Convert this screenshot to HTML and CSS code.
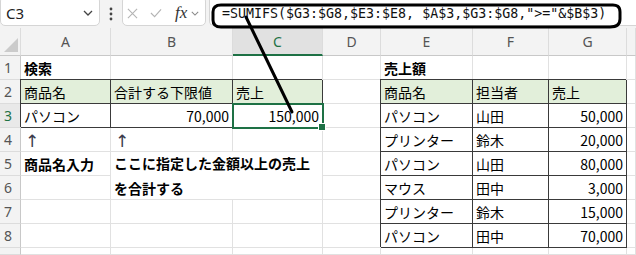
FILE: index.html
```html
<!DOCTYPE html>
<html lang="ja">
<head>
  <meta charset="UTF-8"/>
  <title>SUMIFS</title>
  <link rel="stylesheet" href="styles.css">
</head>
<body>
  <div class="toolbar">
    <div class="namebox">
      <span>C3</span>
      <svg class="chev" viewBox="0 0 10 6"><path d="M1 1l4 4 4-4"/></svg>
    </div>
    <div class="dots">
      <svg viewBox="0 0 4 14"><circle cx="2" cy="2" r="1.4"/><circle cx="2" cy="7" r="1.4"/><circle cx="2" cy="12" r="1.4"/></svg>
    </div>
    <div class="fxbox">
      <svg class="ico cross" viewBox="0 0 12 12"><path d="M1 1l10 10M11 1L1 11"/></svg>
      <svg class="ico check" viewBox="0 0 13 10"><path d="M1 5l4 4 7-8"/></svg>
      <span class="fx">fx</span>
      <svg class="chev small" viewBox="0 0 10 6"><path d="M1 1l4 4 4-4"/></svg>
    </div>
    <div class="formula">=SUMIFS($G3:$G8,$E3:$E8, $A$3,$G3:$G8,"&gt;="&amp;$B$3)</div>
  </div>

  <div class="sheet">
    <!-- column headers -->
    <div class="c ch corner"><svg viewBox="0 0 14 14"><path d="M14 0V14H0z"/></svg></div>
    <div class="c ch">A</div>
    <div class="c ch">B</div>
    <div class="c ch sel">C</div>
    <div class="c ch">D</div>
    <div class="c ch">E</div>
    <div class="c ch">F</div>
    <div class="c ch">G</div>
    <div class="c ch"></div>

    <!-- row 1 -->
    <div class="c rh">1</div>
    <div class="c b">検索</div>
    <div class="c"></div>
    <div class="c"></div>
    <div class="c"></div>
    <div class="c b">売上額</div>
    <div class="c"></div>
    <div class="c"></div>
    <div class="c"></div>

    <!-- row 2 -->
    <div class="c rh">2</div>
    <div class="c t hd">商品名</div>
    <div class="c t hd">合計する下限値</div>
    <div class="c t hd">売上</div>
    <div class="c"></div>
    <div class="c t hd">商品名</div>
    <div class="c t hd">担当者</div>
    <div class="c t hd">売上</div>
    <div class="c"></div>

    <!-- row 3 -->
    <div class="c rh rsel">3</div>
    <div class="c t">パソコン</div>
    <div class="c t num">70,000</div>
    <div class="c t num active">150,000</div>
    <div class="c"></div>
    <div class="c t">パソコン</div>
    <div class="c t">山田</div>
    <div class="c t num">50,000</div>
    <div class="c"></div>

    <!-- row 4 -->
    <div class="c rh">4</div>
    <div class="c arrow">↑&#xFE0E;</div>
    <div class="c arrow">↑&#xFE0E;</div>
    <div class="c"></div>
    <div class="c"></div>
    <div class="c t">プリンター</div>
    <div class="c t">鈴木</div>
    <div class="c t num">20,000</div>
    <div class="c"></div>

    <!-- row 5 -->
    <div class="c rh">5</div>
    <div class="c b">商品名入力</div>
    <div class="c b merged">ここに指定した金額以上の売上<br>を合計する</div>
    <div class="c"></div>
    <div class="c t">パソコン</div>
    <div class="c t">山田</div>
    <div class="c t num">80,000</div>
    <div class="c"></div>

    <!-- row 6 -->
    <div class="c rh">6</div>
    <div class="c"></div>
    <div class="c"></div>
    <div class="c t">マウス</div>
    <div class="c t">田中</div>
    <div class="c t num">3,000</div>
    <div class="c"></div>

    <!-- row 7 -->
    <div class="c rh">7</div>
    <div class="c"></div>
    <div class="c"></div>
    <div class="c"></div>
    <div class="c"></div>
    <div class="c t">プリンター</div>
    <div class="c t">鈴木</div>
    <div class="c t num">15,000</div>
    <div class="c"></div>

    <!-- row 8 -->
    <div class="c rh">8</div>
    <div class="c"></div>
    <div class="c"></div>
    <div class="c"></div>
    <div class="c"></div>
    <div class="c t">パソコン</div>
    <div class="c t">田中</div>
    <div class="c t num">70,000</div>
    <div class="c"></div>

    <!-- row 9 (cut off) -->
    <div class="c rh"></div>
    <div class="c"></div>
    <div class="c"></div>
    <div class="c"></div>
    <div class="c"></div>
    <div class="c"></div>
    <div class="c"></div>
    <div class="c"></div>
    <div class="c"></div>
  </div>

  <!-- hand-drawn annotation over the sheet -->
  <svg class="note" viewBox="0 0 636 255">
    <path d="M221 5H611Q620 4 620 12V19Q620 27 610 27H221Q213 27 213 20V12Q213 5 221 5Z"/>
    <path d="M246 17L292 112"/>
  </svg>
</body>
</html>
```

FILE: styles.css
```css
:root {
  --grid: #e1e1e1;
  --head: #f3f3f3;
  --head-line: #c8c8c8;
  --head-text: #555;
  --green: #1e7145;
  --fill: #e2efda;
  --border: #3a3a3a;
}
* { box-sizing: border-box; }
body {
  margin: 0;
  width: 636px; height: 255px;
  overflow: hidden;
  position: relative;
  background: #fff;
  font-family: "Noto Sans CJK JP", sans-serif;
}

/* Formula bar */
.toolbar {
  display: flex; align-items: flex-start;
  height: 28px;
  background: var(--head);
}
.namebox, .fxbox, .formula {
  height: 30px;
  margin-top: -4px;
  padding-top: 4px;
  background: #fff;
  border: 1px solid #d5d5d5;
  border-radius: 5px;
  display: flex; align-items: center;
}
.namebox {
  width: 100px;
  justify-content: space-between;
  padding-left: 5px; padding-right: 6px;
  font-family: "Noto Sans", sans-serif;
  font-size: 15px;
  color: #222;
}
.chev { width: 10px; height: 6px; fill: none; stroke: #444; stroke-width: 1.3; }
.chev.small { width: 8px; height: 5px; stroke: #888; margin-left: 4px; }

.dots { width: 22px; display: flex; justify-content: center; padding-top: 7px; }
.dots svg { width: 4px; height: 14px; fill: #444; }

.fxbox { width: 84px; padding-left: 4px; }
.ico { fill: none; stroke: #b4b4b4; stroke-width: 1.2; }
.cross { width: 11px; height: 11px; }
.check { width: 12px; height: 10px; margin-left: 12px; }
.fx {
  margin-left: 13px;
  font-family: "Liberation Serif", serif;
  font-style: italic;
  font-size: 17px;
  color: #333;
}

.formula {
  flex: 1;
  margin-left: 3px;
  padding-left: 12px;
  border-right: none;
  border-radius: 5px 0 0 5px;
  font-family: "DejaVu Sans Mono", monospace;
  font-size: 13.3px;
  color: #111;
  white-space: nowrap;
}

/* Sheet grid */
.sheet {
  display: grid;
  grid-template-columns: 21px 90px 122px 90px 58px 92px 76px 78px 9px;
  grid-template-rows: 28px repeat(8, 24px) 7px;
}
.c {
  border-right: 1px solid var(--grid);
  border-bottom: 1px solid var(--grid);
  display: flex; align-items: center;
  padding: 0 3px;
  font-size: 14px;
  color: #000;
  white-space: nowrap;
}
.ch {
  background: var(--head);
  justify-content: center;
  font-family: "Noto Sans", sans-serif;
  color: var(--head-text);
  border-right-color: #dcdcdc;
  border-bottom-color: var(--head-line);
}
.ch.sel {
  background: #e1e1e1;
  color: var(--green);
  border-bottom: 2px solid var(--green);
}
.corner { align-items: flex-end; justify-content: flex-end; padding: 0 2px 3px 0; }
.corner svg { width: 14px; height: 14px; fill: #cbcbcb; }
.rh {
  background: var(--head);
  font-family: "Noto Sans", sans-serif;
  color: var(--head-text);
  padding-left: 4px;
  border-right-color: var(--head-line);
  border-bottom-color: #dcdcdc;
}
.rh.rsel { color: var(--green); background: #e9e9e9; }

.b { font-weight: bold; }
.num { justify-content: flex-end; }
.hd { background: var(--fill); }
.t {
  border-right-color: var(--border);
  border-bottom-color: var(--border);
  box-shadow: -1px -1px 0 var(--border);
}
.arrow {
  font-family: "DejaVu Sans", sans-serif;
  font-size: 17px;
  color: #3a3a4a;
  padding-left: 4px;
  padding-top: 3px;
}
.merged {
  grid-column: 3 / span 2;
  grid-row: 6 / span 2;
  white-space: normal;
  line-height: 25px;
  padding-top: 1px;
}

/* Selected cell */
.active {
  position: relative;
  outline: 2px solid var(--green);
  outline-offset: -1px;
}
.active::after {
  content: "";
  position: absolute;
  right: -4px; bottom: -4px;
  width: 6px; height: 6px;
  background: var(--green);
  border: 1px solid #fff;
}

/* Annotation */
.note {
  position: absolute; top: 0; left: 0;
  width: 636px; height: 255px;
  pointer-events: none;
  fill: none;
  stroke: #000;
  stroke-width: 3;
  stroke-linecap: round;
}
```
